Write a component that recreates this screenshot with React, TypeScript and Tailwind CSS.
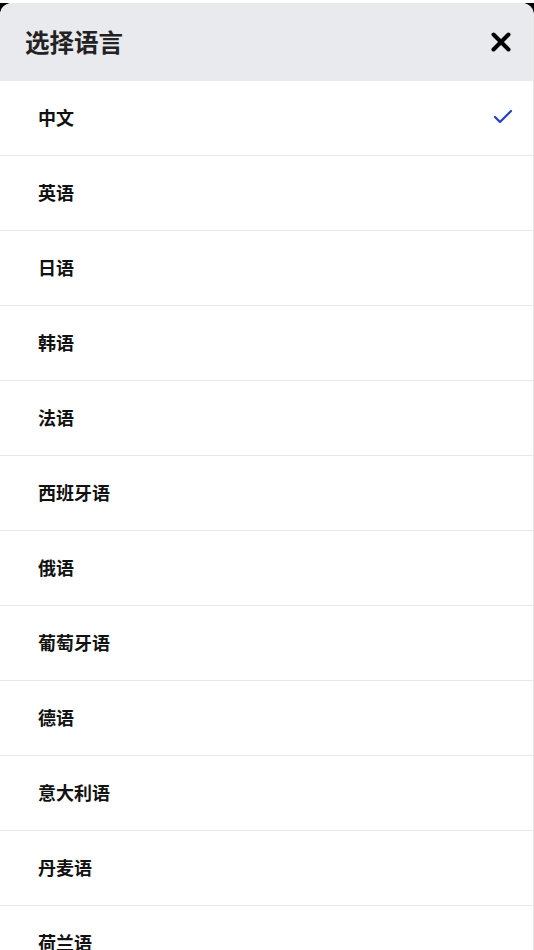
import { X, Check } from 'lucide-react'

const languages = [
  '中文',
  '英语',
  '日语',
  '韩语',
  '法语',
  '西班牙语',
  '俄语',
  '葡萄牙语',
  '德语',
  '意大利语',
  '丹麦语',
  '荷兰语',
  '瑞典语',
]

export default function App() {
  const selected = '中文'
  return (
    <div
      className="h-[950px] overflow-hidden bg-white pt-[3px]"
      style={{ fontFamily: '"Noto Sans CJK SC", "Noto Sans", sans-serif' }}
    >
      <div className="h-full bg-black">
        <div className="h-full overflow-hidden rounded-t-[12px] border-r border-[#e6e6e6] bg-white">
          <div className="flex h-[78px] items-center justify-between bg-[#e9eaee] pl-[25px] pr-[17px]">
            <h2 className="text-[24.5px] font-semibold text-[#222]">选择语言</h2>
            <button aria-label="关闭" className="text-black">
              <X className="h-[30px] w-[30px]" strokeWidth={3.2} />
            </button>
          </div>
          <ul>
            {languages.map((lang) => (
              <li
                key={lang}
                className="flex h-[75px] items-center justify-between border-b border-[#e8e8e8] pl-[38px] pr-[18px]"
              >
                <span className="-mt-[2px] text-[18px] font-bold text-[#111]">{lang}</span>
                {lang === selected && <Check className="-mt-[2px] h-[24px] w-[24px] text-[#1d3fe0]" strokeWidth={2.2} />}
              </li>
            ))}
          </ul>
        </div>
      </div>
    </div>
  )
}
